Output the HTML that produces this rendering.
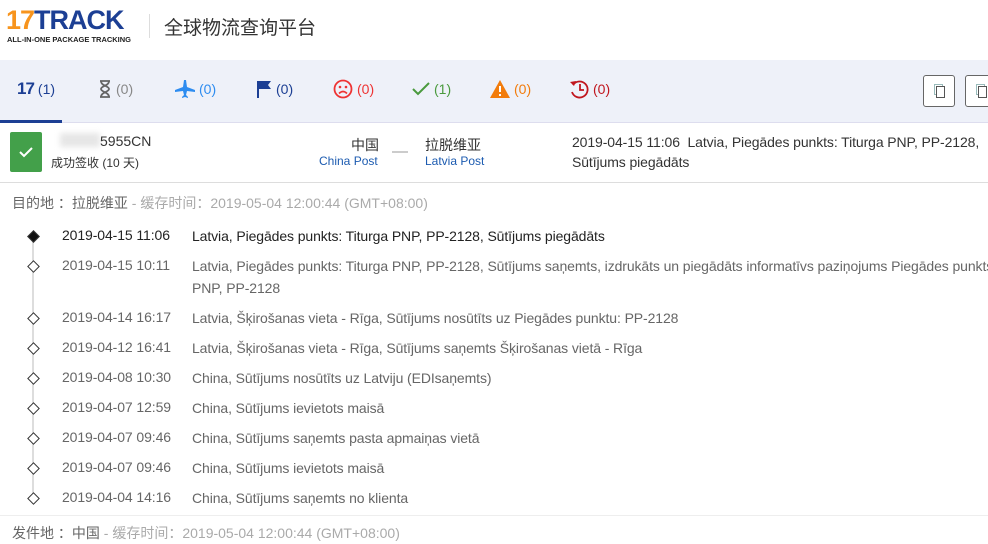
<html><head><style>
body{margin:0;width:988px;height:544px;overflow:hidden;background:#fff;font-family:"Liberation Sans","Noto Sans CJK SC",sans-serif;position:relative}
.a{position:absolute;white-space:nowrap}
.tab{position:absolute;top:79px;font-size:14px;line-height:20px;display:flex;align-items:center;gap:4px}
.row{position:absolute;left:0;font-size:14px;color:#666;letter-spacing:-0.1px}
.row .t{position:absolute;left:62px;white-space:nowrap}
.row .m{position:absolute;left:192px;white-space:nowrap;line-height:22px}
.dm{position:absolute;left:29px;width:7px;height:7px;border:1px solid #333;background:#fff;transform:rotate(45deg)}
</style></head><body>
<div class="a" style="left:6px;top:5px;font-size:27px;font-weight:bold;letter-spacing:-1px;color:#1c3f94;line-height:30px"><span style="color:#f7941d">17</span>TRACK</div>
<div class="a" style="left:7px;top:35px;font-size:7.5px;font-weight:bold;color:#222">ALL-IN-ONE PACKAGE TRACKING</div>
<div class="a" style="left:149px;top:14px;width:1px;height:24px;background:#ddd"></div>
<div class="a" style="left:164px;top:13px;font-size:19px;color:#333">全球物流查询平台</div>
<div class="a" style="left:0;top:60px;width:988px;height:62px;background:#eef1f9;border-bottom:1px solid #dde"></div>
<div class="a" style="left:0;top:120px;width:62px;height:3px;background:#1c3f94"></div>
<div class="tab" style="left:17px;color:#1c3f94"><b style="font-size:17px;letter-spacing:-1px">17</b><span>(1)</span></div>
<div class="tab" style="left:98px;color:#888"><svg width="14" height="18" viewBox="0 0 14 18"><path d="M2 1h10M2 17h10M3 1c0 5 8 5 8 8s-8 3-8 8M11 1c0 5-8 5-8 8s8 3 8 8" fill="none" stroke="#666" stroke-width="1.8"/></svg><span>(0)</span></div>
<div class="tab" style="left:175px;color:#2d8cf0"><svg width="20" height="18" viewBox="0 0 20 18"><path d="M9 0h2l1 7 8 3v2l-8-1-1 4 2 2v1l-3-1-3 1v-1l2-2-1-4-8 1v-2l8-3z" fill="#2d8cf0"/></svg><span>(0)</span></div>
<div class="tab" style="left:256px;color:#1c3f94"><svg width="16" height="18" viewBox="0 0 16 18"><path d="M1 1h14l-3 4 3 4H3v9H1z" fill="#1c3f94"/></svg><span>(0)</span></div>
<div class="tab" style="left:333px;color:#e33"><svg width="20" height="20" viewBox="0 0 20 20"><circle cx="10" cy="10" r="8.5" fill="none" stroke="#e33" stroke-width="1.8"/><circle cx="7" cy="8" r="1.3" fill="#e33"/><circle cx="13" cy="8" r="1.3" fill="#e33"/><path d="M6 14.5q4-4 8 0" fill="none" stroke="#e33" stroke-width="1.6"/></svg><span>(0)</span></div>
<div class="tab" style="left:412px;color:#4a9a3e"><svg width="18" height="16" viewBox="0 0 18 16"><path d="M1 8l5 5L17 2" fill="none" stroke="#4a9a3e" stroke-width="2"/></svg><span>(1)</span></div>
<div class="tab" style="left:490px;color:#f27c0c"><svg width="20" height="18" viewBox="0 0 20 18"><path d="M10 0l10 18H0z" fill="#f27c0c"/><path d="M10 6v6M10 14v2" stroke="#fff" stroke-width="2"/></svg><span>(0)</span></div>
<div class="tab" style="left:569px;color:#c0161e"><svg width="20" height="20" viewBox="0 0 20 20"><path d="M4 6A8 8 0 1 1 3 13" fill="none" stroke="#c0161e" stroke-width="1.8"/><path d="M1 3l4 4 2-5z" fill="#c0161e"/><path d="M11 5v6h4" fill="none" stroke="#c0161e" stroke-width="1.8"/></svg><span>(0)</span></div>
<div class="a" style="left:923px;top:75px;width:30px;height:30px;border:1px solid #666;border-radius:3px;background:#fff"><div style="position:absolute;left:10px;top:8px;width:7px;height:9px;border:1px solid #9bb"></div><div style="position:absolute;left:12px;top:10px;width:7px;height:10px;border:1px solid #555;background:#fff"></div></div>
<div class="a" style="left:965px;top:75px;width:30px;height:30px;border:1px solid #666;border-radius:3px;background:#fff"><div style="position:absolute;left:10px;top:8px;width:7px;height:9px;border:1px solid #9bb"></div><div style="position:absolute;left:12px;top:10px;width:7px;height:10px;border:1px solid #555;background:#fff"></div></div>
<div class="a" style="left:10px;top:132px;width:32px;height:40px;background:#43a04a;border-radius:2px"><svg width="32" height="40" viewBox="0 0 32 40"><path d="M10 20l4 4 8-8" fill="none" stroke="#fff" stroke-width="2"/></svg></div>
<div class="a" style="left:60px;top:133px;width:40px;height:14px;background:#e6e6e6;filter:blur(3px)"></div>
<div class="a" style="left:100px;top:133px;font-size:14px;color:#333">5955CN</div>
<div class="a" style="left:51px;top:154px;font-size:12px;color:#333">成功签收 (10 天)</div>
<div class="a" style="left:351px;top:135px;font-size:14px;color:#333">中国</div>
<div class="a" style="left:319px;top:154px;font-size:12px;color:#1c5bb0">China Post</div>
<div class="a" style="left:392px;top:151px;width:16px;height:2px;background:#ccc"></div>
<div class="a" style="left:425px;top:135px;font-size:14px;color:#333">拉脱维亚</div>
<div class="a" style="left:425px;top:154px;font-size:12px;color:#1c5bb0">Latvia Post</div>
<div class="a" style="left:572px;top:132px;font-size:14px;color:#333;line-height:20px;letter-spacing:-0.1px">2019-04-15 11:06&nbsp; Latvia, Piegādes punkts: Titurga PNP, PP-2128,<br>Sūtījums piegādāts</div>
<div class="a" style="left:0;top:182px;width:988px;height:1px;background:#ddd"></div>
<div class="a" style="left:12px;top:193px;font-size:14px;color:#666">目的地 ：拉脱维亚<span style="color:#aaa"> - 缓存时间：2019-05-04 12:00:44 (GMT+08:00)</span></div>
<div class="a" style="left:32px;top:240px;width:2px;height:255px;background:#ddd"></div>
<div class="row" style="top:227px"><div class="dm" style="top:5px;background:#111"></div><span class="t" style="color:#222">2019-04-15 11:06</span><span class="m" style="color:#222;top:-2px">Latvia, Piegādes punkts: Titurga PNP, PP-2128, Sūtījums piegādāts</span></div>
<div class="row" style="top:257px"><div class="dm" style="top:5px"></div><span class="t">2019-04-15 10:11</span><span class="m" style="top:-2px">Latvia, Piegādes punkts: Titurga PNP, PP-2128, Sūtījums saņemts, izdrukāts un piegādāts informatīvs paziņojums Piegādes punkts<br>PNP, PP-2128</span></div>
<div class="row" style="top:309px"><div class="dm" style="top:5px"></div><span class="t">2019-04-14 16:17</span><span class="m" style="top:-2px">Latvia, Šķirošanas vieta - Rīga, Sūtījums nosūtīts uz Piegādes punktu: PP-2128</span></div>
<div class="row" style="top:339px"><div class="dm" style="top:5px"></div><span class="t">2019-04-12 16:41</span><span class="m" style="top:-2px">Latvia, Šķirošanas vieta - Rīga, Sūtījums saņemts Šķirošanas vietā - Rīga</span></div>
<div class="row" style="top:369px"><div class="dm" style="top:5px"></div><span class="t">2019-04-08 10:30</span><span class="m" style="top:-2px">China, Sūtījums nosūtīts uz Latviju (EDIsaņemts)</span></div>
<div class="row" style="top:399px"><div class="dm" style="top:5px"></div><span class="t">2019-04-07 12:59</span><span class="m" style="top:-2px">China, Sūtījums ievietots maisā</span></div>
<div class="row" style="top:429px"><div class="dm" style="top:5px"></div><span class="t">2019-04-07 09:46</span><span class="m" style="top:-2px">China, Sūtījums saņemts pasta apmaiņas vietā</span></div>
<div class="row" style="top:459px"><div class="dm" style="top:5px"></div><span class="t">2019-04-07 09:46</span><span class="m" style="top:-2px">China, Sūtījums ievietots maisā</span></div>
<div class="row" style="top:489px"><div class="dm" style="top:5px"></div><span class="t">2019-04-04 14:16</span><span class="m" style="top:-2px">China, Sūtījums saņemts no klienta</span></div>
<div class="a" style="left:0;top:515px;width:988px;height:1px;background:#eee"></div>
<div class="a" style="left:12px;top:523px;font-size:14px;color:#666">发件地 ：中国<span style="color:#aaa"> - 缓存时间：2019-05-04 12:00:44 (GMT+08:00)</span></div>
</body></html>
